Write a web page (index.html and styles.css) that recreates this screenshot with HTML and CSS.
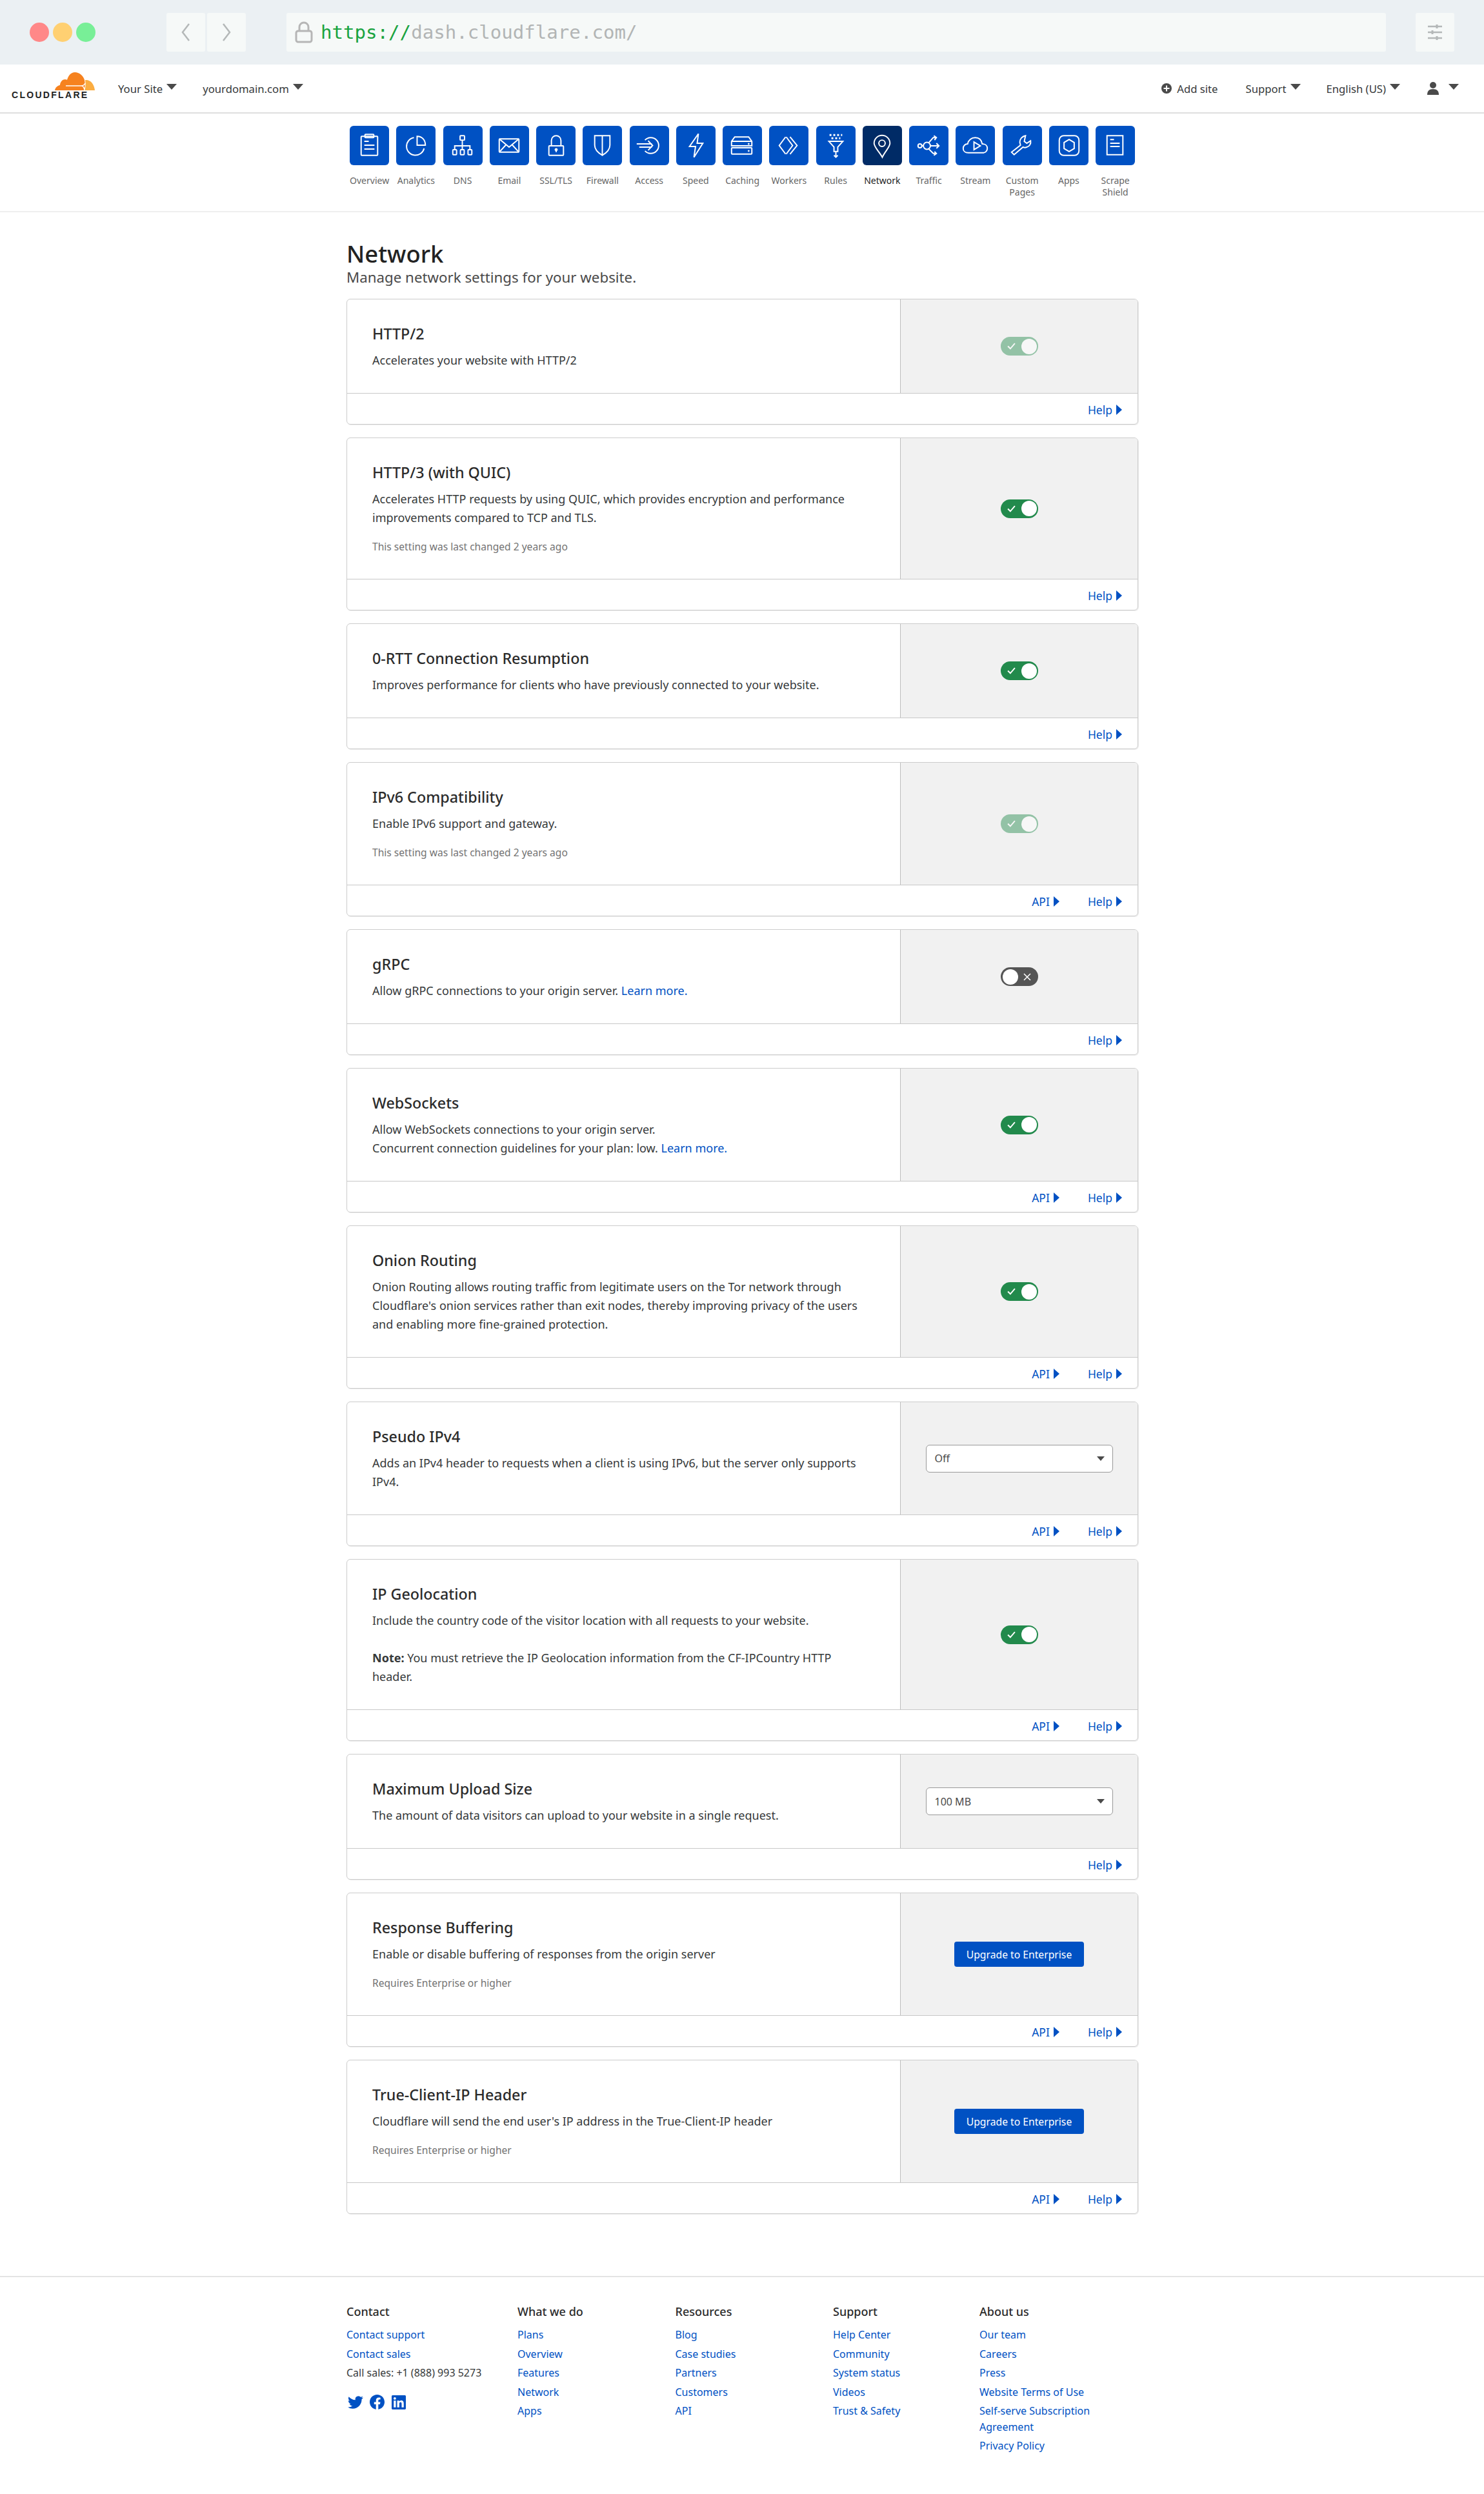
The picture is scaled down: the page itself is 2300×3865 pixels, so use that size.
FILE: index.html
```html
<!DOCTYPE html>
<html lang="en">
<head>
<meta charset="utf-8">
<title>Network | Cloudflare</title>
<link rel="stylesheet" href="styles.css">
</head>
<body>
<div class="chrome">
  <div class="dots"><span class="dot red"></span><span class="dot yellow"></span><span class="dot green"></span></div>
  <div class="navbtns">
    <span class="cbtn"><svg width="16" height="32" viewBox="0 0 16 32"><path d="M13 3 3 16l10 13"/></svg></span>
    <span class="cbtn"><svg width="16" height="32" viewBox="0 0 16 32"><path d="M3 3l10 13L3 29"/></svg></span>
  </div>
  <div class="urlbar">
    <svg class="lock" width="28" height="34" viewBox="0 0 28 34"><path d="M7 15V9a7 7 0 0 1 14 0v6"/><rect x="2" y="15" width="24" height="17" rx="3"/></svg>
    <span class="url"><span class="https">https://</span>dash.cloudflare.com/</span>
  </div>
  <span class="cbtn settings"><svg width="22" height="24" viewBox="0 0 22 24"><path d="M0 3h22M0 12h22M0 21h22"/><path class="thick" d="M14 0v6M7 9v6M14 18v6"/></svg></span>
</div>

<header class="topbar">
  <div class="logo">
    <svg class="cloud" width="62" height="29" viewBox="0 0 62 29">
      <path fill="#f6821f" d="M0 28C.5 24 4 20.500 8 20c0-4 3-9 8-9 1 0 2 .3 3 .7C21 5 25 0 31 0c7 0 13 5 15 12 1 5 1 11-1 16z"/>
      <path fill="#fbad41" d="M47 12c8-1 14 6 15 16H46c2-5 2-11 1-16z"/>
      <path fill="none" stroke="#fff" stroke-width="1.600" d="M17 21h24M41 21c3 0 5-2 6-4M41 21c3 0 4 2 5 6"/>
    </svg>
    <span class="logotext">CLOUDFLARE</span>
  </div>
  <a class="tlink site">Your Site<i class="caret"></i></a>
  <a class="tlink domain">yourdomain.com<i class="caret"></i></a>
  <div class="spacer"></div>
  <a class="tlink add"><svg width="16" height="16" viewBox="0 0 16 16"><circle cx="8" cy="8" r="8" fill="#4a4a4a"/><path d="M8 3.500v9M3.500 8h9" stroke="#fff" stroke-width="2"/></svg>Add site</a>
  <a class="tlink support">Support<i class="caret"></i></a>
  <a class="tlink lang">English (US)<i class="caret"></i></a>
  <a class="tlink user"><svg width="20" height="20" viewBox="0 0 20 20"><circle cx="10" cy="5" r="5" fill="#4a4a4a"/><path d="M1 20c0-6 3-9 9-9s9 3 9 9z" fill="#4a4a4a"/></svg><i class="caret"></i></a>
</header>

<nav class="tabs">
  <div class="tabrow">
    <a class="tab"><span class="tile"><svg viewBox="0 0 62 61"><rect x="18" y="16" width="26" height="30" rx="1"/><rect x="24" y="13" width="14" height="5" rx="1"/><path d="M23 24h7M23 30h16M23 36h16"/></svg></span><span class="tablabel">Overview</span></a>
    <a class="tab"><span class="tile"><svg viewBox="0 0 62 61"><path d="M28 18a14 14 0 1 0 16 17"/><path d="M33 16v14h13c0-8-5-14-13-14z"/></svg></span><span class="tablabel">Analytics</span></a>
    <a class="tab"><span class="tile"><svg viewBox="0 0 62 61"><rect x="26.500" y="15" width="7" height="7" rx="1"/><path d="M30 22v15M18 37v-6h24v6"/><rect x="15" y="37" width="6" height="8" rx="1"/><rect x="27" y="37" width="6" height="8" rx="1"/><rect x="39" y="37" width="6" height="8" rx="1"/></svg></span><span class="tablabel">DNS</span></a>
    <a class="tab"><span class="tile"><svg viewBox="0 0 62 61"><rect x="15" y="20" width="31" height="21" rx="1"/><path d="M15 20l15.500 13L46 20M15 41l11-12M46 41 35 29"/></svg></span><span class="tablabel">Email</span></a>
    <a class="tab"><span class="tile"><svg viewBox="0 0 62 61"><rect x="20" y="31" width="23" height="15" rx="1"/><path d="M24 31v-8.500a7.500 7.500 0 0 1 15 0V31M31.500 37v4"/><circle class="fill" cx="31.500" cy="37" r="2"/></svg></span><span class="tablabel">SSL/TLS</span></a>
    <a class="tab"><span class="tile"><svg viewBox="0 0 62 61"><path d="M19 15h24v15c0 8-7 13-12 16-5-3-12-8-12-16zM31 15v31"/></svg></span><span class="tablabel">Firewall</span></a>
    <a class="tab"><span class="tile"><svg viewBox="0 0 62 61"><path d="M24 22a12.500 12.500 0 1 1 0 17M11 28h24M15 33h20M29 23l7 7.500-7 7.500"/></svg></span><span class="tablabel">Access</span></a>
    <a class="tab"><span class="tile"><svg viewBox="0 0 62 61"><path d="M35 12 21 32h9.500L28 49l14-22h-9z"/></svg></span><span class="tablabel">Speed</span></a>
    <a class="tab"><span class="tile"><svg viewBox="0 0 62 61"><path d="M19 17h22l5 7v7H14v-7zM14 24h32"/><rect x="14" y="34" width="32" height="10" rx="1"/><circle class="fill" cx="41" cy="28" r="1"/><circle class="fill" cx="41" cy="39" r="1"/></svg></span><span class="tablabel">Caching</span></a>
    <a class="tab"><span class="tile"><svg viewBox="0 0 62 61"><path d="M26 17 16 30.500 26 44M27 17l10 13.500L27 44M33 17l11 13.500L33 44"/></svg></span><span class="tablabel">Workers</span></a>
    <a class="tab"><span class="tile"><svg viewBox="0 0 62 61"><path class="dash" d="M21 14h20M24 19h14"/><path d="M20 24h22l-8 9v7h-6v-7zM31 41v8M28 46l3 3 3-3"/></svg></span><span class="tablabel">Rules</span></a>
    <a class="tab active"><span class="tile"><svg viewBox="0 0 62 61"><path d="M31 49c-5-9-13-16-13-22a12.500 12.500 0 0 1 25 0c0 6-8 13-12 22z"/><circle cx="30.500" cy="27" r="5"/></svg></span><span class="tablabel">Network</span></a>
    <a class="tab"><span class="tile"><svg viewBox="0 0 62 61"><circle cx="17" cy="31" r="3"/><circle cx="28" cy="31" r="5.500"/><path d="M20 31h2.500M33.500 31H47M43 27l4 4-4 4M31 26l7-8h5M39 15l4 3-3 4M31 36l7 7h5M40 40l3 3-4 3"/></svg></span><span class="tablabel">Traffic</span></a>
    <a class="tab"><span class="tile"><svg viewBox="0 0 62 61"><path d="M20 42c-5 0-8-3-8-7s3-7 7-7c1-6 6-10 12-10s10 4 11 10c5 0 8 3 8 7s-3 7-7 7z"/><path d="M29 25l10 6-10 6z"/></svg></span><span class="tablabel">Stream</span></a>
    <a class="tab"><span class="tile"><svg viewBox="0 0 62 61"><path d="M36 15c-5 1-9 5-9 10 0 2 1 3 1 5L14 41l4 4 14-12c2 1 4 1 6 0 4-1 7-5 6-10l-6 4-4-3z"/></svg></span><span class="tablabel">Custom Pages</span></a>
    <a class="tab"><span class="tile"><svg viewBox="0 0 62 61"><rect x="16" y="15" width="31" height="31" rx="7"/><path d="M31.500 21l8 4.700v9.600l-8 4.700-8-4.700v-9.600z"/></svg></span><span class="tablabel">Apps</span></a>
    <a class="tab"><span class="tile"><svg viewBox="0 0 62 61"><rect x="18" y="15" width="25" height="30"/><path d="M23 21h6M23 27h15M23 32h15"/></svg></span><span class="tablabel">Scrape Shield</span></a>
  </div>
</nav>

<main class="content">
  <h1>Network</h1>
  <p class="lede">Manage network settings for your website.</p>

  <section class="card">
    <div class="cardmain">
      <div class="info"><h3>HTTP/2</h3><p>Accelerates your website with HTTP/2</p></div>
      <div class="panel"><span class="toggle on disabled"><svg class="check" viewBox="0 0 12 10"><path d="M1 5l3.500 3.500L11 1"/></svg><i class="knob"></i></span></div>
    </div>
    <div class="cardfoot"><a class="more">Help<i class="rcaret"></i></a></div>
  </section>

  <section class="card">
    <div class="cardmain">
      <div class="info"><h3>HTTP/3 (with QUIC)</h3><p>Accelerates HTTP requests by using QUIC, which provides encryption and performance<br>improvements compared to TCP and TLS.</p><p class="note">This setting was last changed 2 years ago</p></div>
      <div class="panel"><span class="toggle on"><svg class="check" viewBox="0 0 12 10"><path d="M1 5l3.500 3.500L11 1"/></svg><i class="knob"></i></span></div>
    </div>
    <div class="cardfoot"><a class="more">Help<i class="rcaret"></i></a></div>
  </section>

  <section class="card">
    <div class="cardmain">
      <div class="info"><h3>0-RTT Connection Resumption</h3><p>Improves performance for clients who have previously connected to your website.</p></div>
      <div class="panel"><span class="toggle on"><svg class="check" viewBox="0 0 12 10"><path d="M1 5l3.500 3.500L11 1"/></svg><i class="knob"></i></span></div>
    </div>
    <div class="cardfoot"><a class="more">Help<i class="rcaret"></i></a></div>
  </section>

  <section class="card">
    <div class="cardmain">
      <div class="info"><h3>IPv6 Compatibility</h3><p>Enable IPv6 support and gateway.</p><p class="note">This setting was last changed 2 years ago</p></div>
      <div class="panel"><span class="toggle on disabled"><svg class="check" viewBox="0 0 12 10"><path d="M1 5l3.500 3.500L11 1"/></svg><i class="knob"></i></span></div>
    </div>
    <div class="cardfoot"><a class="more">API<i class="rcaret"></i></a><a class="more">Help<i class="rcaret"></i></a></div>
  </section>

  <section class="card">
    <div class="cardmain">
      <div class="info"><h3>gRPC</h3><p>Allow gRPC connections to your origin server. <a class="inline">Learn more.</a></p></div>
      <div class="panel"><span class="toggle off"><i class="knob"></i><svg class="cross" viewBox="0 0 12 12"><path d="M1 1l10 10M11 1 1 11"/></svg></span></div>
    </div>
    <div class="cardfoot"><a class="more">Help<i class="rcaret"></i></a></div>
  </section>

  <section class="card">
    <div class="cardmain">
      <div class="info"><h3>WebSockets</h3><p>Allow WebSockets connections to your origin server.<br>Concurrent connection guidelines for your plan: low. <a class="inline">Learn more.</a></p></div>
      <div class="panel"><span class="toggle on"><svg class="check" viewBox="0 0 12 10"><path d="M1 5l3.500 3.500L11 1"/></svg><i class="knob"></i></span></div>
    </div>
    <div class="cardfoot"><a class="more">API<i class="rcaret"></i></a><a class="more">Help<i class="rcaret"></i></a></div>
  </section>

  <section class="card">
    <div class="cardmain">
      <div class="info"><h3>Onion Routing</h3><p>Onion Routing allows routing traffic from legitimate users on the Tor network through<br>Cloudflare's onion services rather than exit nodes, thereby improving privacy of the users<br>and enabling more fine-grained protection.</p></div>
      <div class="panel"><span class="toggle on"><svg class="check" viewBox="0 0 12 10"><path d="M1 5l3.500 3.500L11 1"/></svg><i class="knob"></i></span></div>
    </div>
    <div class="cardfoot"><a class="more">API<i class="rcaret"></i></a><a class="more">Help<i class="rcaret"></i></a></div>
  </section>

  <section class="card">
    <div class="cardmain">
      <div class="info"><h3>Pseudo IPv4</h3><p>Adds an IPv4 header to requests when a client is using IPv6, but the server only supports<br>IPv4.</p></div>
      <div class="panel"><span class="select">Off<i class="caret small"></i></span></div>
    </div>
    <div class="cardfoot"><a class="more">API<i class="rcaret"></i></a><a class="more">Help<i class="rcaret"></i></a></div>
  </section>

  <section class="card">
    <div class="cardmain">
      <div class="info"><h3>IP Geolocation</h3><p>Include the country code of the visitor location with all requests to your website.<br><br><b>Note:</b> You must retrieve the IP Geolocation information from the CF-IPCountry HTTP<br>header.</p></div>
      <div class="panel"><span class="toggle on"><svg class="check" viewBox="0 0 12 10"><path d="M1 5l3.500 3.500L11 1"/></svg><i class="knob"></i></span></div>
    </div>
    <div class="cardfoot"><a class="more">API<i class="rcaret"></i></a><a class="more">Help<i class="rcaret"></i></a></div>
  </section>

  <section class="card">
    <div class="cardmain">
      <div class="info"><h3>Maximum Upload Size</h3><p>The amount of data visitors can upload to your website in a single request.</p></div>
      <div class="panel"><span class="select">100 MB<i class="caret small"></i></span></div>
    </div>
    <div class="cardfoot"><a class="more">Help<i class="rcaret"></i></a></div>
  </section>

  <section class="card">
    <div class="cardmain">
      <div class="info"><h3>Response Buffering</h3><p>Enable or disable buffering of responses from the origin server</p><p class="note">Requires Enterprise or higher</p></div>
      <div class="panel"><a class="upgrade">Upgrade to Enterprise</a></div>
    </div>
    <div class="cardfoot"><a class="more">API<i class="rcaret"></i></a><a class="more">Help<i class="rcaret"></i></a></div>
  </section>

  <section class="card">
    <div class="cardmain">
      <div class="info"><h3>True-Client-IP Header</h3><p>Cloudflare will send the end user's IP address in the True-Client-IP header</p><p class="note">Requires Enterprise or higher</p></div>
      <div class="panel"><a class="upgrade">Upgrade to Enterprise</a></div>
    </div>
    <div class="cardfoot"><a class="more">API<i class="rcaret"></i></a><a class="more">Help<i class="rcaret"></i></a></div>
  </section>
</main>

<footer class="sitefoot">
  <div class="footgrid">
    <div class="fcol">
      <h4>Contact</h4>
      <a>Contact support</a><a>Contact sales</a><span>Call sales: +1 (888) 993 5273</span>
      <div class="social">
        <svg class="tw" viewBox="0 0 24 24"><path d="M23.953 4.570a10 10 0 0 1-2.825.775 4.958 4.958 0 0 0 2.163-2.723c-.951.555-2.005.959-3.127 1.184a4.920 4.920 0 0 0-8.384 4.482C7.690 8.095 4.067 6.130 1.640 3.162a4.822 4.822 0 0 0-.666 2.475c0 1.710.870 3.213 2.188 4.096a4.904 4.904 0 0 1-2.228-.616v.060a4.923 4.923 0 0 0 3.946 4.827 4.996 4.996 0 0 1-2.212.085 4.936 4.936 0 0 0 4.604 3.417 9.867 9.867 0 0 1-6.102 2.105c-.390 0-.779-.023-1.170-.067a13.995 13.995 0 0 0 7.557 2.209c9.053 0 13.998-7.496 13.998-13.985 0-.210 0-.420-.015-.630A9.935 9.935 0 0 0 24 4.590z"/></svg>
        <svg class="fb" viewBox="0 0 24 24"><path d="M24 12.073c0-6.627-5.373-12-12-12s-12 5.373-12 12c0 5.990 4.388 10.954 10.125 11.854v-8.385H7.078v-3.470h3.047V9.430c0-3.007 1.792-4.669 4.533-4.669 1.312 0 2.686.235 2.686.235v2.953H15.830c-1.491 0-1.956.925-1.956 1.874v2.250h3.328l-.532 3.470h-2.796v8.385C19.612 23.027 24 18.062 24 12.073z"/></svg>
        <svg class="in" viewBox="0 0 24 24"><path d="M20.447 20.452h-3.554v-5.569c0-1.328-.027-3.037-1.852-3.037-1.853 0-2.136 1.445-2.136 2.939v5.667H9.351V9h3.414v1.561h.046c.477-.9 1.637-1.850 3.370-1.850 3.601 0 4.267 2.370 4.267 5.455v6.286zM5.337 7.433c-1.144 0-2.063-.926-2.063-2.065 0-1.138.920-2.063 2.063-2.063 1.140 0 2.064.925 2.064 2.063 0 1.139-.925 2.065-2.064 2.065zm1.782 13.019H3.555V9h3.564v11.452zM22.225 0H1.771C.792 0 0 .774 0 1.729v20.542C0 23.227.792 24 1.771 24h20.451C23.200 24 24 23.227 24 22.271V1.729C24 .774 23.200 0 22.222 0h.003z"/></svg>
      </div>
    </div>
    <div class="fcol"><h4>What we do</h4><a>Plans</a><a>Overview</a><a>Features</a><a>Network</a><a>Apps</a></div>
    <div class="fcol"><h4>Resources</h4><a>Blog</a><a>Case studies</a><a>Partners</a><a>Customers</a><a>API</a></div>
    <div class="fcol"><h4>Support</h4><a>Help Center</a><a>Community</a><a>System status</a><a>Videos</a><a>Trust &amp; Safety</a></div>
    <div class="fcol"><h4>About us</h4><a>Our team</a><a>Careers</a><a>Press</a><a>Website Terms of Use</a><a class="wrap">Self-serve Subscription<br>Agreement</a><a>Privacy Policy</a></div>
  </div>
</footer>
</body>
</html>
```

FILE: styles.css
```css
* { box-sizing: border-box; }
html, body { margin: 0; padding: 0; }
body {
  background: #fff;
  color: #36393a;
  font-family: "Noto Sans", "Open Sans", sans-serif;
  font-size: 16px;
}
a { color: #0051c3; text-decoration: none; }
svg { display: block; }

/* browser chrome */
.chrome {
  height: 100px;
  background: #ebf0f3;
  display: flex;
  align-items: center;
  padding: 0 46px;
}
.dots { display: flex; gap: 6px; width: 212px; }
.dot { width: 30px; height: 30px; border-radius: 50%; }
.red { background: #ff8888; }
.yellow { background: #ffd072; }
.green { background: #78ef97; }
.navbtns { display: flex; gap: 3px; width: 186px; }
.cbtn {
  width: 60px;
  height: 60px;
  background: #f6f9f8;
  border-radius: 3px;
  display: flex;
  align-items: center;
  justify-content: center;
}
.cbtn svg path { fill: none; stroke: #b4b8b8; stroke-width: 2.500; }
.cbtn svg path.thick { stroke-width: 3; }
.urlbar {
  width: 1704px;
  height: 60px;
  background: #f6f9f8;
  border-radius: 3px;
  display: flex;
  align-items: center;
  padding-left: 13px;
  gap: 12px;
}
.lock { fill: none; stroke: #b6b6b6; stroke-width: 3; }
.url {
  font-family: "DejaVu Sans Mono", monospace;
  font-size: 29.100px;
  color: #b2b5b5;
  white-space: nowrap;
}
.https { color: #1aa33f; }
.settings { margin-left: 46px; }

/* top navigation */
.topbar {
  height: 76px;
  border-bottom: 2px solid #dedede;
  display: flex;
  align-items: center;
  padding-right: 39px;
  position: relative;
}
.logo { width: 183px; padding: 12px 0 0 18px; align-self: flex-start; }
.cloud { margin-left: 67px; }
.logotext {
  display: block;
  margin-top: -1px;
  font-family: "Liberation Sans", sans-serif;
  font-weight: 700;
  font-size: 14px;
  line-height: 15px;
  letter-spacing: 2.300px;
  color: #222;
  white-space: nowrap;
}
.tlink {
  color: #36393a;
  font-size: 16.700px;
  display: flex;
  align-items: center;
  white-space: nowrap;
}
.spacer { flex: 1; }
.site { margin-right: 40px; }
.caret {
  display: inline-block;
  width: 0;
  height: 0;
  margin-left: 6px;
  margin-top: -5px;
  border-left: 8px solid transparent;
  border-right: 8px solid transparent;
  border-top: 9px solid #4a4a4a;
}
.add svg { margin-right: 8px; }
.add { margin-right: 43px; }
.support { margin-right: 40px; }
.lang { margin-right: 41px; }
.user .caret { margin-left: 14px; }

/* product tabs */
.tabs {
  height: 153px;
  border-bottom: 2px solid #efefef;
  display: flex;
  justify-content: center;
  padding: 19px 0 0 1px;
}
.tabrow { display: flex; width: 1228px; }
.tab {
  flex: 0 0 72.250px;
  display: flex;
  flex-direction: column;
  align-items: center;
  text-align: center;
  padding: 0 5px;
}
.tile {
  display: block;
  width: 61px;
  height: 61px;
  flex: none;
  background: #0051c3;
  border-radius: 6px;
}
.tile svg { width: 61px; height: 61px; fill: none; stroke: #fff; stroke-width: 2; }
.tile svg .fill { fill: #fff; stroke-width: 1; }
.tile svg .dash { stroke-width: 3; stroke-dasharray: 3 3; }
.active .tile { background: #002b66; }
.tablabel {
  margin-top: 15px;
  font-size: 14px;
  line-height: 18px;
  color: #666;
  white-space: normal;
}
.active .tablabel { color: #222; }

/* content */
.content { width: 1227px; margin: 0 0 0 537px; padding-top: 42px; }
h1 {
  margin: 0;
  font-size: 36.400px;
  line-height: 44px;
  font-weight: 500;
  color: #222;
}
.lede {
  margin: 0 0 18px;
  font-size: 22.300px;
  line-height: 30px;
  color: #4a4a4a;
}
.card {
  border: 1px solid #ccc;
  border-radius: 6px;
  margin-bottom: 20px;
  overflow: hidden;
  box-shadow: 1px 1px 0 #ececec;
}
.cardmain { display: flex; align-items: stretch; }
.info { flex: 1; min-width: 0; padding: 38px 20px 36.500px 39px; }
.info h3 {
  margin: 0 0 11.500px;
  font-size: 23.300px;
  line-height: 30px;
  font-weight: 500;
  color: #2b2b2b;
}
.info p {
  margin: 0;
  font-size: 18px;
  line-height: 29px;
  white-space: nowrap;
}
.info p.note {
  margin-top: 19px;
  padding-bottom: 2px;
  font-size: 15.600px;
  line-height: 23px;
  color: #737373;
}
.inline { color: #0051c3; }
.panel {
  flex: 0 0 368px;
  background: #f1f1f1;
  border-left: 1px solid #bdbdbd;
  display: flex;
  align-items: center;
  justify-content: center;
}
.cardfoot {
  height: 48px;
  border-top: 1px solid #c8c8c8;
  display: flex;
  justify-content: flex-end;
  align-items: center;
  padding: 2px 24px 0 0;
  gap: 44px;
}
.more { display: flex; align-items: center; font-size: 17.500px; color: #0051c3; }
.rcaret {
  display: inline-block;
  width: 0;
  height: 0;
  margin-left: 6px;
  border-top: 8px solid transparent;
  border-bottom: 8px solid transparent;
  border-left: 9px solid #0051c3;
}

/* controls */
.toggle {
  width: 58px;
  height: 29px;
  border-radius: 15px;
  display: flex;
  align-items: center;
  justify-content: space-between;
  padding: 0 2px 0 10px;
}
.toggle.on { background: #228a4c; }
.toggle.disabled { opacity: .45; }
.toggle.off { background: #555; padding: 0 11px 0 3px; }
.knob { display: block; width: 24px; height: 24px; background: #fff; border-radius: 50%; }
.check { width: 13px; height: 11px; fill: none; stroke: #fff; stroke-width: 1.800; }
.cross { width: 12px; height: 12px; fill: none; stroke: #fff; stroke-width: 1.500; }
.select {
  width: 290px;
  height: 43px;
  background: #fff;
  border: 1px solid #999;
  border-radius: 6px;
  display: flex;
  align-items: center;
  justify-content: space-between;
  padding: 0 12px 0 13px;
  font-size: 16px;
  color: #4a4a4a;
}
.caret.small {
  border-left-width: 6px;
  border-right-width: 6px;
  border-top-width: 7px;
  margin-top: 0;
}
.upgrade {
  width: 201px;
  height: 39px;
  background: #0051c3;
  border-radius: 4px;
  color: #fff;
  font-size: 15.700px;
  display: flex;
  align-items: center;
  justify-content: center;
}

/* site footer */
.sitefoot {
  margin-top: 96px;
  border-top: 2px solid #e4e4e4;
  padding: 39px 0 58px 537px;
}
.footgrid {
  display: grid;
  grid-template-columns: 265px 244.500px 244.500px 227px 240px;
}
.fcol { display: flex; flex-direction: column; font-size: 16px; line-height: 29.500px; white-space: nowrap; }
.fcol h4 { margin: 0 0 7px; font-size: 18px; line-height: 29px; font-weight: 500; color: #2b2b2b; }
.fcol .wrap { line-height: 25px; padding: 2px 0; }
.social { display: flex; align-items: center; margin-top: 18px; padding-left: 2px; }
.social svg { fill: #0051c3; }
.tw { width: 24px; height: 24px; margin-right: 10px; }
.fb { width: 23px; height: 23px; margin-right: 11px; }
.in { width: 22px; height: 22px; }
```
